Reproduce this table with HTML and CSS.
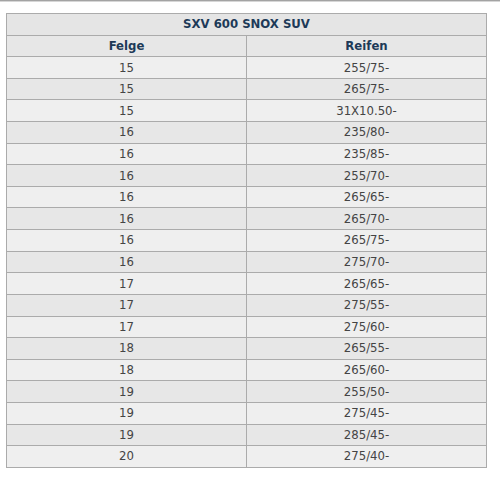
FILE: index.html
```html
<!DOCTYPE html>
<html lang="de">
<head>
<meta charset="utf-8">
<title>SXV 600 SNOX SUV</title>
<link rel="stylesheet" href="styles.css">
</head>
<body>
<div class="topline"></div>
<div class="wrap">
<table class="sizes">
  <thead>
    <tr class="title"><th colspan="2">SXV 600 SNOX SUV</th></tr>
    <tr class="head"><th>Felge</th><th>Reifen</th></tr>
  </thead>
  <tbody>
    <tr><td>15</td><td>255/75-</td></tr>
    <tr><td>15</td><td>265/75-</td></tr>
    <tr><td>15</td><td>31X10.50-</td></tr>
    <tr><td>16</td><td>235/80-</td></tr>
    <tr><td>16</td><td>235/85-</td></tr>
    <tr><td>16</td><td>255/70-</td></tr>
    <tr><td>16</td><td>265/65-</td></tr>
    <tr><td>16</td><td>265/70-</td></tr>
    <tr><td>16</td><td>265/75-</td></tr>
    <tr><td>16</td><td>275/70-</td></tr>
    <tr><td>17</td><td>265/65-</td></tr>
    <tr><td>17</td><td>275/55-</td></tr>
    <tr><td>17</td><td>275/60-</td></tr>
    <tr><td>18</td><td>265/55-</td></tr>
    <tr><td>18</td><td>265/60-</td></tr>
    <tr><td>19</td><td>255/50-</td></tr>
    <tr><td>19</td><td>275/45-</td></tr>
    <tr><td>19</td><td>285/45-</td></tr>
    <tr><td>20</td><td>275/40-</td></tr>
  </tbody>
</table>
</div>
</body>
</html>
```
FILE: styles.css
```css
html, body {
  margin: 0;
  padding: 0;
  background: #ffffff;
}
body {
  font-family: "DejaVu Sans Condensed", "DejaVu Sans", sans-serif;
  font-size: 13px;
  color: #444444;
}
.topline {
  height: 1px;
  background: #a3a3a3;
  border-bottom: 1px solid #d6d6d6;
}
.wrap {
  padding: 11px 0 0 6px;
}
.sizes {
  width: 481px;
  border-collapse: collapse;
  table-layout: fixed;
  border: 1px solid #a6a6a6;
}
.sizes th,
.sizes td {
  border: 1px solid #ababab;
  text-align: center;
  padding: 0;
  height: 20.62px;
  line-height: 16px;
}
.sizes th {
  font-weight: bold;
  color: #1d3a58;
}
.title th {
  background: #e5e5e5;
}
.head th {
  background: #e7e7e7;
}
.sizes tbody tr:nth-child(odd) td {
  background: #efefef;
}
.sizes tbody tr:nth-child(even) td {
  background: #e7e7e7;
}
```
